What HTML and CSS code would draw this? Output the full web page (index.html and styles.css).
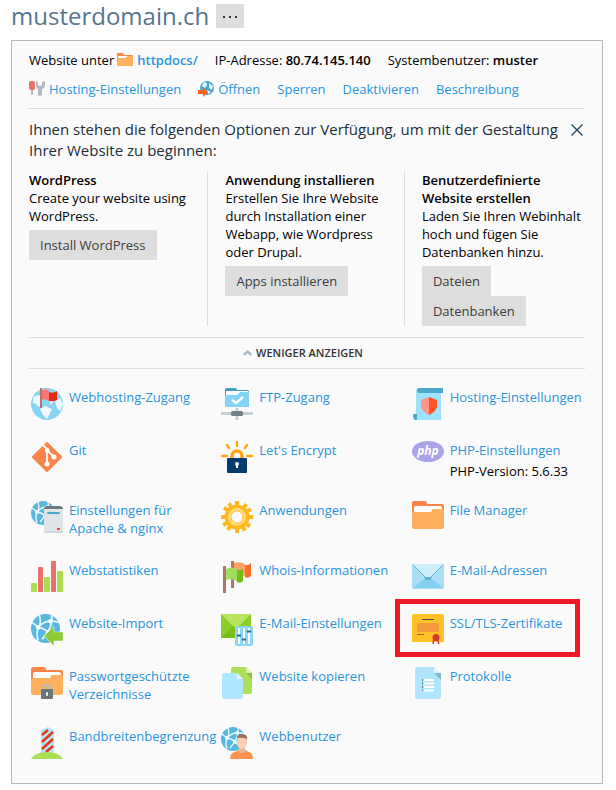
FILE: index.html
```html
<!DOCTYPE html>
<html lang="de">
<head>
<meta charset="utf-8">
<title>musterdomain.ch</title>
<link rel="stylesheet" href="styles.css">
</head>
<body>
<svg class="defs" aria-hidden="true">
  <symbol id="net" viewBox="0 0 24 24">
    <circle cx="12" cy="12" r="12" fill="#57b7de"/>
    <g fill="none" stroke="#e6f6fc" stroke-width="1.4"><path d="M7 1Q9 8 6 11Q4 17 6 22M6 11Q13 3 23 7M6 11Q14 12 19 21M1 7L6 11M17 1Q19 10 9 21"/></g>
    <g fill="#f5fcff"><circle cx="6" cy="11" r="2"/><circle cx="16" cy="6" r="1.8"/><circle cx="14" cy="15" r="1.8"/></g>
  </symbol>
  <symbol id="folder" viewBox="0 0 32 28">
    <path d="M0 2Q0 0 2 0H13Q15 0 15 3H30Q32 3 32 5V14H0Z" fill="#fc8548"/>
    <path d="M2 7Q2 5 4 5H28Q30 5 30 7V18H2Z" fill="#fff"/>
    <path d="M0 13Q0 11 2 11H18Q20 11 20 9Q20 8 22 8H30Q32 8 32 10V26Q32 28 30 28H2Q0 28 0 26Z" fill="#ffb05d"/>
  </symbol>
</svg>

<header class="title">
  <h1>musterdomain.ch</h1>
  <button class="btn more" type="button" aria-label="Mehr"><svg width="14" height="4" viewBox="0 0 14 4" fill="#333"><rect width="2" height="2" x="0" y="2"/><rect width="2" height="2" x="6" y="2"/><rect width="2" height="2" x="12" y="2"/></svg></button>
</header>

<main class="panel">
  <div class="info">
    <span class="pair">Website unter <a class="strong" href="#"><svg class="mini" viewBox="0 0 16 16"><path d="M0 2Q0 1 1 1H6L7 3H15Q16 3 16 4V8H0Z" fill="#fc8548"/><path d="M1 4H15V9H1Z" fill="#fff"/><path d="M0 6H8L11 4H16V13Q16 14 15 14H1Q0 14 0 13Z" fill="#ffb05d"/></svg>httpdocs/</a></span>
    <span>IP-Adresse: <b>80.74.145.140</b></span>
    <span>Systembenutzer: <b>muster</b></span>
  </div>
  <nav class="info actions">
    <a href="#"><svg class="mini" viewBox="0 0 16 16"><rect width="6" height="9" rx="2" fill="#e9736b"/><path d="M3 9V14" stroke="#b4bbc0" stroke-width="2"/><path d="M7 0L9 1V4L11 5L13 4V1L16 0V4Q16 7 13 8V14Q11 16 9 14V8Q7 7 7 4Z" fill="#b4bbc0"/></svg>Hosting-Einstellungen</a>
    <a href="#"><svg class="mini" viewBox="0 0 16 16"><circle cx="9" cy="7" r="7" fill="#4aa6cf"/><path d="M5 2L8 1L9 4L7 7L4 5ZM11 2L15 5L14 9L11 7ZM9 9L13 11L10 13Z" fill="#e8f7fc"/><path d="M0 9H5V6L10 11L5 16V13H0Z" fill="#fb641f"/></svg>Öffnen</a>
    <a href="#">Sperren</a>
    <a href="#">Deaktivieren</a>
    <a href="#">Beschreibung</a>
  </nav>

  <section class="start">
    <div class="lead">
      <h2>Ihnen stehen die folgenden Optionen zur Verfügung, um mit der Gestaltung Ihrer Website zu beginnen:</h2>
      <button class="close" type="button" aria-label="Schließen"><svg width="12" height="12" viewBox="0 0 12 12" fill="none" stroke="#23495e" stroke-width="1.4"><path d="M.5 .5L11.500 11.500M11.500 .5L.5 11.500"/></svg></button>
    </div>
    <div class="options">
      <div class="option">
        <h3>WordPress</h3>
        <p>Create your website using WordPress.</p>
        <button class="btn" type="button">Install WordPress</button>
      </div>
      <div class="option">
        <h3>Anwendung installieren</h3>
        <p>Erstellen Sie Ihre Website durch Installation einer Webapp, wie Wordpress oder Drupal.</p>
        <button class="btn" type="button">Apps installieren</button>
      </div>
      <div class="option">
        <h3>Benutzerdefinierte Website erstellen</h3>
        <p>Laden Sie Ihren Webinhalt hoch und fügen Sie Datenbanken hinzu.</p>
        <button class="btn" type="button">Dateien</button>
        <button class="btn" type="button">Datenbanken</button>
      </div>
    </div>
  </section>

  <button class="toggle" type="button"><svg width="9" height="6" viewBox="0 0 9 6" fill="none" stroke="#adbac5" stroke-width="2.400"><path d="M.8 5L4.500 1.500L8.200 5"/></svg>WENIGER ANZEIGEN</button>

  <ul class="tools">
    <li><a href="#"><svg class="icon" viewBox="0 0 32 32"><circle cx="16" cy="16" r="16" fill="#87d4f3"/><path d="M2 9L8 7L12 10L11 15L8 19L5 16L2 15ZM9 21L14 18L21 21L19 25L16 31L12 27ZM24 13L29 10L32 16L29 23L26 20ZM18 13L23 12L20 17Z" fill="#f1fbff"/><rect x="9" width="2" height="20" fill="#a9796a"/><path d="M11 2Q15 0 18 3V13Q15 10 11 12Z" fill="#fc7376"/><path d="M18 4Q22 6 26 3V12Q22 14 18 13Z" fill="#e82b10"/></svg><span>Webhosting-Zugang</span></a></li>
    <li><a href="#"><svg class="icon" viewBox="0 0 32 32"><path d="M4 2Q4 0 6 0H14Q16 0 16 2H26Q28 2 28 4V10H4Z" fill="#409eb9"/><rect x="5" y="3" width="22" height="8" fill="#fff"/><path d="M4 8Q4 7 6 7H16L19 4H28V19H6Q4 19 4 18Z" fill="#81d4f5"/><path d="M11 12L15 15L22 9" fill="none" stroke="#fff" stroke-width="2.500"/><path d="M16 20V32M0 25.500H32" stroke="#c7ced1" stroke-width="3"/><rect x="10" y="23" width="12" height="5" rx="1.500" fill="#738087"/></svg><span>FTP-Zugang</span></a></li>
    <li><a href="#"><svg class="icon" viewBox="0 0 32 32"><path d="M5 1H29V32H4V3Z" fill="#9fe2fb"/><path d="M7 0H31V5H7Q5 5 5 2Q5 0 7 0Z" fill="#4ba8ca"/><path d="M1 27Q1 26 3 26H5V32H3Q1 31 1 27Z" fill="#4ba8ca"/><path d="M17 9L9 12V18Q9 23 17 27Z" fill="#ff958a"/><path d="M17 9L25 12V18Q25 23 17 27Z" fill="#ff5424"/></svg><span>Hosting-Einstellungen</span></a></li>

    <li><a href="#"><svg class="icon" viewBox="0 0 32 32"><rect x="5" y="5" width="22" height="22" rx="1" fill="#fa8549" transform="rotate(45 16 16)"/><path d="M11 3L16 8V23M16 9L23 16" fill="none" stroke="#fff" stroke-width="1.800"/><g fill="#fff"><circle cx="16" cy="9" r="2.300"/><circle cx="16" cy="23" r="2.500"/><circle cx="23" cy="16" r="2.500"/></g></svg><span>Git</span></a></li>
    <li><a href="#"><svg class="icon" viewBox="0 0 32 32"><path d="M11 19V15A5 5 0 0 1 21 15V19" fill="none" stroke="#ffa514" stroke-width="3.600"/><path d="M16 1V5M6 4L8 7M26 4L24 7M1 15H6M26 15H31" stroke="#ffa514" stroke-width="2.300" stroke-linecap="round"/><rect x="6" y="17" width="20" height="15" rx="1" fill="#063b70"/><circle cx="16" cy="23" r="2" fill="#fff"/><path d="M16 23V27" stroke="#fff" stroke-width="2"/></svg><span>Let's Encrypt</span></a></li>
    <li><a href="#"><svg class="icon" viewBox="0 0 32 32"><ellipse cx="16" cy="10.500" rx="16" ry="10.500" fill="#aba3ea"/><text class="php" x="16" y="14" text-anchor="middle">php</text></svg><span>PHP-Einstellungen</span></a><p class="note">PHP-Version: 5.6.33</p></li>

    <li><a href="#"><svg class="icon" viewBox="0 0 32 32"><use href="#net" width="24" height="24"/><path d="M13 9V7Q14 5 16 5H29Q31 5 32 7V9Z" fill="#6b7a82"/><path d="M13 8H32V31Q32 32 30 32H15Q13 32 13 30Z" fill="#dfe4e8"/><path d="M13 31H32" stroke="#bdc5cb"/><rect x="16" y="11" width="13" height="2" rx="1" fill="#4ba8cf"/><rect x="26" y="27" width="3" height="2" fill="#f44928"/></svg><span>Einstellungen für Apache &amp; nginx</span></a></li>
    <li><a href="#"><svg class="icon" viewBox="0 0 32 32"><g stroke="#ffb91f" stroke-width="4"><path d="M16 0V32M0 16H32"/><path d="M16 0V32M0 16H32" transform="rotate(36 16 16)"/><path d="M16 0V32M0 16H32" transform="rotate(60 16 16)"/></g><circle cx="16" cy="16" r="12.500" fill="#ffb91f"/><circle cx="16" cy="16" r="7.500" fill="#fafafa" stroke="#ffdb7a" stroke-width="3"/><circle cx="16" cy="16" r="6" fill="none" stroke="#ffc535" stroke-width="1"/></svg><span>Anwendungen</span></a></li>
    <li><a href="#"><svg class="icon" viewBox="0 0 32 32"><use href="#folder" width="32" height="28"/></svg><span>File Manager</span></a></li>

    <li><a href="#"><svg class="icon" viewBox="0 0 32 32"><g fill="#aade51"><rect y="22" width="6" height="9" rx="1"/><rect x="13" y="16" width="6" height="15" rx="1"/><rect x="26" y="10" width="6" height="21" rx="1"/></g><g fill="#ec716a"><rect x="7" y="6" width="5" height="25" rx="1"/><rect x="20" width="5" height="31" rx="1"/></g></svg><span>Webstatistiken</span></a></li>
    <li><a href="#"><svg class="icon" viewBox="0 0 32 32"><path d="M11.500 0V27M3.500 5V32" stroke="#a9796a" stroke-width="3"/><path d="M13 2Q18 0 24 3V15L13 13Z" fill="#ffa366"/><path d="M24 4Q27 5 30 2V15Q27 18 24 16Z" fill="#fc6d29"/><path d="M5 8Q10 5 16 8V20Q10 17 5 19Z" fill="#a0dd5c"/><path d="M16 9Q19 10 22 8V20Q19 23 16 21Z" fill="#72bd12"/></svg><span>Whois-Informationen</span></a></li>
    <li><a href="#"><svg class="icon" viewBox="0 0 32 32"><rect y="3" width="32" height="25" rx="1" fill="#acdff6"/><path d="M1 3H31L18 17Q16 19 14 17Z" fill="#cdeffc"/><path d="M1 27L13 17Q16 20 19 17L31 27Z" fill="#84ceef"/><path d="M1 4L14 17Q16 18 18 17L31 4" fill="none" stroke="#68b3d3" stroke-width="1"/><path d="M12 16H20L18 19H14Z" fill="#61a9c8"/></svg><span>E-Mail-Adressen</span></a></li>

    <li><a href="#"><svg class="icon" viewBox="0 0 32 32"><use href="#net" width="29" height="29"/><path d="M13 22L23 12V18H32V27H23V32Z" fill="#8fcb35" stroke="#eef8df" stroke-width=".5"/></svg><span>Website-Import</span></a></li>
    <li><a href="#"><svg class="icon" viewBox="0 0 32 32"><rect width="30" height="24" rx="1" fill="#8bcd29"/><path d="M0 0H30L15 15Z" fill="#b7e55d"/><path d="M0 24L12 12L15 15L18 12L30 24Z" fill="#79be1b"/><rect x="14" y="12" width="18" height="20" rx="2" fill="#8bd7f6"/><path d="M18 14V30M23 14V30M28 14V30" stroke="#fff" stroke-width="2"/><path d="M16 21.500H20M21 25.500H25M26 17.500H30" stroke="#236d8b" stroke-width="2"/></svg><span>E-Mail-Einstellungen</span></a></li>
    <li class="marked"><a href="#"><svg class="icon" viewBox="0 0 32 32"><rect width="32" height="28" rx="1.500" fill="#ffc125"/><rect x="5" y="9" width="22" height="9" fill="#f79c3d"/><path d="M10 5.500H22" stroke="#455158"/><path d="M5 20.500H12" stroke="#8f6833"/><path d="M22 25L21 30M25 25L27 30" stroke="#d83d36" stroke-width="1.500"/><circle cx="24" cy="23.500" r="3.500" fill="#d9362b"/></svg><span>SSL/TLS-Zertifikate</span></a></li>

    <li><a href="#"><svg class="icon" viewBox="0 0 32 32"><use href="#folder" width="32" height="28"/><path d="M12 23V21Q12 18 16 18Q20 18 20 21V23" fill="none" stroke="#b3bbc0" stroke-width="2"/><rect x="10" y="22" width="12" height="10" rx="1" fill="#68757c"/><rect x="15" y="25" width="2" height="4" rx="1" fill="#eef2f4"/></svg><span>Passwortgeschützte Verzeichnisse</span></a></li>
    <li><a href="#"><svg class="icon" viewBox="0 0 32 32"><path d="M10 2Q10 0 12 0H25L31 6V25Q31 27 29 27H12Q10 27 10 25Z" fill="#acdf58"/><path d="M25 0V6H31Z" fill="#d8f2a8"/><path d="M25 6H31V12Z" fill="#8bc63b"/><path d="M1 8Q1 6 3 6H16L22 12V30Q22 32 20 32H3Q1 32 1 30Z" fill="#b0e6fd"/><path d="M16 6V12H22Z" fill="#e2f7ff"/></svg><span>Website kopieren</span></a></li>
    <li><a href="#"><svg class="icon" viewBox="0 0 32 32"><path d="M3 2Q3 0 5 0H22L29 7V30Q29 32 27 32H5Q3 32 3 30Z" fill="#b0e6fd"/><path d="M22 0V6L29 7Z" fill="#dcf6ff"/><path d="M22 6H29V13Z" fill="#85b8cb"/><path d="M10.500 12V24" stroke="#4c8397" stroke-dasharray="2 1.500"/><path d="M12 13H22M12 16.500H22M12 20H22M12 23.500H22" stroke="#fff" stroke-width="1.800"/></svg><span>Protokolle</span></a></li>

    <li><a href="#"><svg class="icon" viewBox="0 0 32 32"><path d="M10 3L17 0L23 3V27H10Z" fill="#b2e5fa"/><g stroke="#e43a16" stroke-width="2.500"><path d="M11 8L17 3M11 15L22 5M11 22L22 12M15 25L22 19"/></g><path d="M0 32Q4 25 16 25Q28 25 32 32Z" fill="#acdf58"/></svg><span>Bandbreitenbegrenzung</span></a></li>
    <li><a href="#"><svg class="icon" viewBox="0 0 32 32"><use href="#net" width="24" height="24"/><path d="M9 32Q9 26 14 25L18 23H24L28 25Q32 26 32 32Z" fill="#ff914f"/><path d="M18 19H24V25Q21 27 18 25Z" fill="#e9b697"/><ellipse cx="21" cy="15" rx="5" ry="7" fill="#f8cfb2"/><path d="M16 13Q15 7 21 7Q27 7 26 13Q24 10 16 11Z" fill="#99705d"/></svg><span>Webbenutzer</span></a></li>
  </ul>
</main>
</body>
</html>
```
FILE: styles.css
```css
* { box-sizing: border-box; }

body {
  margin: 0;
  padding: 0 13px 7px 11px;
  background: #fff;
  color: #000;
  font: 13px/18px "Open Sans", "Noto Sans", sans-serif;
}

h1, h2, h3, p, ul { margin: 0; padding: 0; font-size: 13px; font-weight: 400; }
b, h3, .strong { font-weight: 600; }
svg { flex: none; }
button { font: inherit; border: 0; cursor: pointer; }
a { color: #2b95dd; text-decoration: none; }
a:hover { text-decoration: underline; }

.defs { position: absolute; width: 0; height: 0; }

.title {
  display: flex;
  align-items: center;
  gap: 7px;
  height: 32px;
  margin-bottom: 8px;
}
.title h1 { font-size: 24px; line-height: 32px; color: #557590; }

.btn {
  display: block;
  height: 30px;
  padding: 0 11px;
  background: #dedede;
  color: #3c3c3c;
}
.more { height: 24px; padding: 0 7px; display: flex; align-items: center; }

.panel {
  padding: 10px 17px 24px;
  border: 1px solid #b8b8b8;
  background: #fafafa;
}

.info { display: flex; flex-wrap: wrap; gap: 0 17px; line-height: 18px; }
.info a { display: inline-flex; align-items: center; gap: 4px; }
.pair { display: flex; gap: 3px; }
.actions { margin-top: 11px; padding-bottom: 10px; }
.mini { width: 16px; height: 16px; }

.start { border-top: 1px solid #dedede; border-bottom: 1px solid #dedede; padding: 10px 0 11px; }
.lead { display: flex; align-items: flex-start; justify-content: space-between; gap: 8px; }
.lead h2 { font-size: 15px; line-height: 21px; color: #222e38; }
.close { display: flex; padding: 5px 2px; background: none; }

.options {
  display: grid;
  grid-template-columns: 11fr 11fr 10fr;
  gap: 17px;
  margin-top: 10px;
}
.option:not(:last-child) { border-right: 1px solid #dedede; }
.option p { margin-bottom: 5px; }

.toggle {
  display: flex;
  align-items: center;
  justify-content: center;
  gap: 4px;
  width: 100%;
  height: 31px;
  padding: 0 8px 0 0;
  border-bottom: 1px solid #dedede;
  background: none;
  color: #333;
  font-size: 11px;
  font-weight: 600;
}

.tools {
  display: grid;
  grid-template-columns: repeat(3, minmax(0, 1fr));
  row-gap: 21px;
  margin: 19px -17px 0 2px;
  list-style: none;
}
.tools li { position: relative; padding-right: 12px; }
.tools a { display: flex; gap: 6px; min-height: 32px; }
.tools a span { padding-bottom: 3px; }
.icon { width: 32px; height: 32px; }
.note { margin: -11px 0 0 38px; }
.php { font: italic 700 12px "Open Sans", sans-serif; fill: #fff; }

.marked::after {
  content: "";
  position: absolute;
  inset: -15px 22px -11px -17px;
  border: 5px solid #ed1c24;
  pointer-events: none;
}
```
